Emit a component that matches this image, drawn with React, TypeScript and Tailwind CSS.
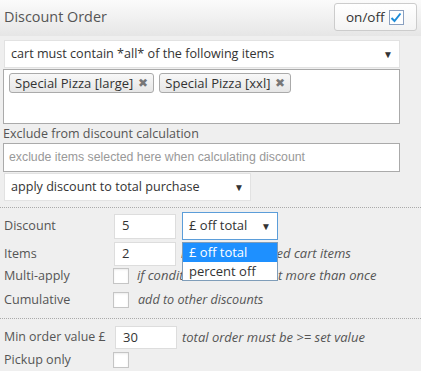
import React from "react";

const font = { fontFamily: '"Open Sans", "Liberation Sans", sans-serif' };

function Tag({ label }: { label: string }) {
  return (
    <div className="flex items-center h-[20px] px-[5px] border border-[#aaaaaa] rounded-[3px] bg-gradient-to-b from-[#f8f8f8] to-[#e6e6e6] text-[13px] text-[#333] gap-[5px] leading-none">
      <span>{label}</span>
      <span className="text-[#777] text-[12px]">✖</span>
    </div>
  );
}

function Checkbox() {
  return <div className="w-[16px] h-[16px] bg-white border border-[#c5c5c5] shadow-[inset_0_1px_2px_rgba(0,0,0,0.08)]" />;
}

function TextInput({ value, h = 25 }: { value: string; h?: number }) {
  return (
    <div
      className="w-[62px] bg-white border border-[#dddddd] flex items-center pl-[7px] text-[13px] text-[#333]"
      style={{ height: h }}
    >
      {value}
    </div>
  );
}

function Arrow() {
  return <span className="text-[10px] text-[#333]">▼</span>;
}

export default function App() {
  return (
    <div className="w-[421px] h-[371px] overflow-hidden bg-[#efefef] text-[#555]" style={font}>
      {/* header */}
      <div className="h-[36px] flex items-start justify-between bg-gradient-to-b from-[#fbfbfb] to-[#e6e6e6]">
        <div className="pl-[4px] pt-[6px] text-[14.4px] text-[#555]">Discount Order</div>
        <div className="mt-[3px] mr-[4px] w-[83px] h-[28px] border border-[#cccccc] rounded-[3px] bg-gradient-to-b from-white to-[#f4f4f4] flex items-center pl-[11px] gap-[4px] text-[13.5px] text-[#333]">
          <span>on/off</span>
          <div className="w-[15px] h-[15px] border border-[#8aa0c0] bg-white flex items-center justify-center">
            <svg width="12" height="11" viewBox="0 0 12 11">
              <path d="M1.5 6 L4.5 9 L10.5 1.5" stroke="#1e8cd8" strokeWidth="2" fill="none" />
            </svg>
          </div>
        </div>
      </div>

      {/* select 1 */}
      <div className="mt-[4px] ml-[4px] w-[396px] h-[28px] bg-white border border-[#e2e2e2] flex items-center justify-between pl-[6px] pr-[6px] text-[12.6px] text-[#333]">
        <span>cart must contain *all* of the following items</span>
        <Arrow />
      </div>

      {/* multi select */}
      <div className="mt-[1px] ml-[3px] w-[397px] h-[55px] bg-white border border-[#aaaaaa] flex items-start gap-[5px] pl-[5px] pt-[3px]">
        <Tag label="Special Pizza [large]" />
        <Tag label="Special Pizza [xxl]" />
      </div>

      <div className="ml-[3px] mt-[1px] h-[17px] text-[12.5px] leading-[17px] text-[#555]">Exclude from discount calculation</div>

      <div
        className="ml-[3px] mt-[1px] w-[397px] h-[29px] bg-white border border-[#aaaaaa] flex items-center pl-[5px] text-[12.3px] text-[#999]"
        style={{ fontFamily: '"Liberation Sans", Arial, sans-serif' }}
      >
        exclude items selected here when calculating discount
      </div>

      <div className="mt-[1px] ml-[4px] w-[247px] h-[28px] bg-white border border-[#e2e2e2] flex items-center justify-between pl-[6px] pr-[6px] text-[12.6px] text-[#333]">
        <span>apply discount to total purchase</span>
        <Arrow />
      </div>

      <div className="mt-[6px] border-t border-dotted border-[#aaaaaa]" />

      {/* rows */}
      <div className="relative">
        <div className="flex items-center h-[28px] mt-[4px]">
          <div className="w-[114px] pl-[4px] text-[12.6px]">Discount</div>
          <TextInput value="5" />
          <div className="ml-[6px] w-[96px] h-[28px] bg-white border border-[#5b9dd9] flex items-center justify-between pl-[6px] pr-[6px] text-[13px] text-[#333]">
            <span>£ off total</span>
            <Arrow />
          </div>
        </div>
        <div className="flex items-center h-[24px] mt-[2px]">
          <div className="w-[114px] pl-[4px] text-[12.6px]">Items</div>
          <TextInput value="2" h={24} />
          <div className="ml-[5px] italic text-[13px] text-[#555]">number of selected cart items</div>
        </div>
        <div className="flex items-center h-[16px] mt-[2px]">
          <div className="w-[113px] pl-[4px] text-[12.6px]">Multi-apply</div>
          <Checkbox />
          <div className="ml-[8px] italic text-[13px] text-[#555]">if condition has been met more than once</div>
        </div>
        <div className="flex items-center h-[16px] mt-[8px]">
          <div className="w-[113px] pl-[4px] text-[12.6px]">Cumulative</div>
          <Checkbox />
          <div className="ml-[9px] italic text-[12.6px] text-[#555]">add to other discounts</div>
        </div>

        {/* dropdown list overlay */}
        <div className="absolute left-[182px] top-[30px] w-[96px] h-[39px] bg-white border border-[#7f9db9] text-[13px] leading-[19px]">
          <div className="bg-[#1e90ff] text-white pl-[6px] h-[19px]">£ off total</div>
          <div className="text-[#333] pl-[6px] h-[18px]">percent off</div>
        </div>
      </div>

      <div className="mt-[10px] border-t border-dotted border-[#aaaaaa]" />

      <div className="flex items-center h-[23px] mt-[7px]">
        <div className="w-[115px] pl-[4px] text-[12.4px]">Min order value £</div>
        <TextInput value="30" h={23} />
        <div className="ml-[5px] italic text-[13px] text-[#555]">total order must be &gt;= set value</div>
      </div>
      <div className="flex items-center h-[16px] mt-[3px]">
        <div className="w-[113px] pl-[4px] text-[12.6px]">Pickup only</div>
        <Checkbox />
      </div>
    </div>
  );
}
